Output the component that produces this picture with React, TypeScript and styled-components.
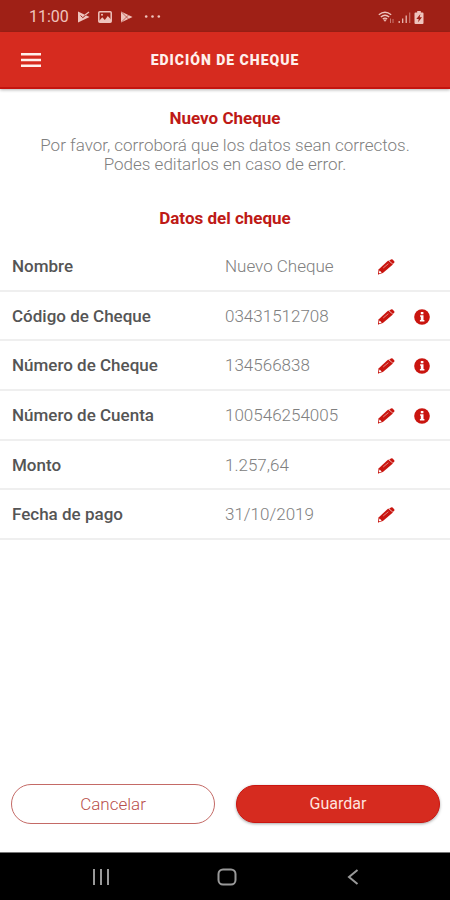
import React from "react";
import styled, { createGlobalStyle, css } from "styled-components";

const GlobalStyle = createGlobalStyle`
  * { box-sizing: border-box; }
  body {
    margin: 0;
    background: #fff;
    font-family: Roboto, "Liberation Sans", sans-serif;
    font-size: 17px;
  }
`;

const Screen = styled.div`
  display: flex;
  flex-direction: column;
  min-height: 100vh;
`;

const StatusBar = styled.div`
  display: flex;
  align-items: center;
  justify-content: space-between;
  height: 32px;
  padding: 2px 26px 0 29px;
  background: #9f2016;
  color: #efc4bd;
`;

const StatusGroup = styled.div<{ $gap: number }>`
  display: flex;
  align-items: center;
  gap: ${(p) => p.$gap}px;
`;

const Clock = styled.span`
  font-size: 16px;
  line-height: 20px;
`;

const AppBar = styled.header`
  display: grid;
  grid-template-columns: 40px 1fr 40px;
  align-items: center;
  height: 57px;
  padding: 0 11px;
  background: #d62b1f;
  border-bottom: 2px solid #c4140e;
  box-shadow: 0 1px 3px rgba(0, 0, 0, 0.3);
`;

const IconButton = styled.button`
  display: inline-flex;
  align-items: center;
  justify-content: center;
  padding: 0;
  border: 0;
  background: none;
  color: #c9150f;
  cursor: pointer;
`;

const MenuButton = styled(IconButton)`
  width: 40px;
  height: 40px;
  color: #fff0ec;
`;

const Title = styled.h1`
  margin: 0;
  text-align: center;
  color: #fff0ec;
  font-size: 14px;
  font-weight: 900;
  line-height: 20px;
  letter-spacing: 1px;
`;

const Main = styled.main`
  flex: 1;
  display: flex;
  flex-direction: column;
  padding-top: 19px;
`;

const Heading = styled.h2`
  margin: 0;
  text-align: center;
  color: #be1a16;
  font-size: 17px;
  font-weight: 700;
  line-height: 20px;
`;

const Intro = styled.p`
  margin: 8px 16px 34px;
  text-align: center;
  color: #808080;
  font-weight: 300;
  line-height: 19px;
`;

const Details = styled.table`
  width: 100%;
  height: 297px;
  margin-top: 15px;
  table-layout: fixed;
  border-collapse: collapse;
  text-align: left;
`;

const Row = styled.tr`
  border-bottom: 2px solid #efefef;
`;

const Label = styled.th`
  width: 50%;
  padding: 0 0 0 12px;
  color: #555;
  font-weight: 500;
`;

const Value = styled.td`
  padding: 0;
  color: #808080;
  font-weight: 300;
`;

const Actions = styled.td`
  width: 80px;
  padding: 0;
`;

const ActionList = styled.div`
  display: flex;
  align-items: center;
  gap: 12px;
  padding: 2px 0 0 4px;

  button {
    width: 24px;
    height: 24px;
  }
`;

const Footer = styled.div`
  display: grid;
  grid-template-columns: 1fr 1fr;
  gap: 21px;
  margin-top: auto;
  padding: 16px 10px 28px 11px;
`;

const PillButton = styled.button<{ $primary?: boolean }>`
  height: 40px;
  border: 1px solid #c46a66;
  border-radius: 20px;
  background: #fff;
  color: #b9504c;
  font: 300 17px/20px Roboto, "Liberation Sans", sans-serif;
  cursor: pointer;
  ${(p) =>
    p.$primary &&
    css`
      height: 38px;
      margin-top: 1px;
      border-color: #cb1510;
      background: #d62b1f;
      color: #ffe3de;
      font-size: 16px;
      font-weight: 400;
      box-shadow: 0 1px 3px rgba(0, 0, 0, 0.35);
    `}
`;

const NavArea = styled.div`
  height: 48px;
  padding-left: 4px;
  border-top: 1px solid #777;
  background: #000;
`;

const NavBar = styled.nav`
  display: grid;
  grid-template-columns: repeat(3, 1fr);
  width: 85%;
  margin: 0 auto;
`;

const NavButton = styled(IconButton)`
  height: 48px;
  color: #999;
`;

const PencilIcon = () => (
  <svg width="18" height="16" viewBox="0 0 18 16" aria-hidden="true">
    <path d="M12.2 1.4 14 .4q.8-.4 1.6.2l1.600 1.700q.7.8 0 1.500l-1.300 1.300z" fill="currentColor" />
    <path d="M11.200 1.600 15.900 5.500 5.900 14 1 15.400l.5-4.900z" fill="currentColor" />
    <path d="m2.500 11.500 2.200 1.900-2.200 1-.6-.6z" fill="#fff" />
    <path d="m6.200 9 5.200-4.300" stroke="#eaa39e" strokeWidth=".8" />
    <path d="m1 15.400.5-1.600 1 1z" fill="currentColor" />
  </svg>
);

const InfoIcon = () => (
  <svg width="16" height="16" viewBox="0 0 16 16" aria-hidden="true">
    <circle cx="8" cy="8" r="7.8" fill="currentColor" />
    <path d="M6.8 3.1h2.6v2.2H6.8zM6.1 6.3h3.4v4.8h.9v1.5H5.9v-1.5h.9V7.8h-.7z" fill="#fff" />
  </svg>
);

const PlayCheckIcon = () => (
  <svg width="13" height="12" viewBox="0 0 13 12" aria-hidden="true">
    <path d="M1 .5 12.5 6 1 11.5z" fill="currentColor" />
    <path d="m3.5 4.5 2.3 2.2L11 2" fill="none" stroke="#9f2016" strokeWidth="1" />
    <path d="m8 4 4-3" stroke="currentColor" strokeWidth="1.2" />
  </svg>
);

const ImageIcon = () => (
  <svg width="14" height="12" viewBox="0 0 14 12" aria-hidden="true">
    <rect x=".8" y=".8" width="12.4" height="10.4" rx="1" fill="none" stroke="currentColor" strokeWidth="1.5" />
    <path d="m1 10 3.3-3.8L6.8 9l3-4L13 8.5V11H1z" fill="currentColor" />
    <circle cx="4" cy="3.7" r="1" fill="currentColor" />
  </svg>
);

const PlayIcon = () => (
  <svg width="13" height="12" viewBox="0 0 13 12" aria-hidden="true">
    <path d="M1 .5 12.5 6 1 11.5z" fill="currentColor" />
    <path d="M1.5 1 8.5 8M1.5 11l7-7" stroke="#9f2016" strokeWidth=".6" />
  </svg>
);

const DotsIcon = () => (
  <svg width="20" height="4" viewBox="0 0 20 4" fill="currentColor" aria-hidden="true">
    <circle cx="5.2" cy="1.5" r="1.3" />
    <circle cx="11.5" cy="1.5" r="1.3" />
    <circle cx="17.8" cy="1.5" r="1.3" />
  </svg>
);

const WifiIcon = () => (
  <svg width="17" height="13" viewBox="0 0 17 13" fill="none" stroke="currentColor" aria-hidden="true">
    <path d="M.8 3.8Q7 -1.3 13.2 3.8M2.8 6Q7 2.5 11.2 6M4.8 8Q7 6.2 9.2 8" strokeWidth="1.3" />
    <path d="m5.7 8.8 1.3 1.6 1.3-1.6z" fill="currentColor" strokeWidth=".5" />
    <path d="M12.5 12V7.5M15 8v4" strokeWidth=".9" opacity=".6" />
  </svg>
);

const SignalIcon = () => (
  <svg width="13" height="13" viewBox="0 0 13 13" fill="none" stroke="currentColor" strokeWidth="1.2" aria-hidden="true">
    <path d="M1.2 12v-2M4.7 12V7.5M8.2 12V4.5" />
    <path d="M11.7 12V1.5" opacity=".5" />
  </svg>
);

const BatteryIcon = () => (
  <svg width="10" height="13" viewBox="0 0 10 13" aria-hidden="true">
    <path d="M3.2 0h3.6v1.5h1.7q1 0 1 1V12q0 1-1 1h-7q-1 0-1-1V2.5q0-1 1-1h1.7z" fill="currentColor" />
    <path d="M6.4 3 2.3 8h2.4l-.6 3.2L8 6.3H5.7z" fill="#9f2016" />
  </svg>
);

const MenuIcon = () => (
  <svg width="20" height="14" viewBox="0 0 20 14" fill="currentColor" aria-hidden="true">
    <path d="M0 0h20v2.6H0zM0 5.7h20v2.6H0zM0 11.4h20V14H0z" />
  </svg>
);

const RecentsIcon = () => (
  <svg width="18" height="16" viewBox="0 0 18 16" fill="currentColor" aria-hidden="true">
    <path d="M1 0h2v16H1zM8 0h2v16H8zM15 0h2v16h-2z" />
  </svg>
);

const HomeIcon = () => (
  <svg width="20" height="18" viewBox="0 0 20 18" fill="none" stroke="currentColor" strokeWidth="2" aria-hidden="true">
    <rect x="1.5" y="1.5" width="17" height="15" rx="4.5" />
  </svg>
);

const BackIcon = () => (
  <svg width="12" height="16" viewBox="0 0 12 16" fill="none" stroke="currentColor" strokeWidth="2" aria-hidden="true">
    <path d="M10.5 1 2 8l8.5 7" />
  </svg>
);

interface Field {
  label: string;
  value: string;
  info?: boolean;
}

const fields: Field[] = [
  { label: "Nombre", value: "Nuevo Cheque" },
  { label: "Código de Cheque", value: "03431512708", info: true },
  { label: "Número de Cheque", value: "134566838", info: true },
  { label: "Número de Cuenta", value: "100546254005", info: true },
  { label: "Monto", value: "1.257,64" },
  { label: "Fecha de pago", value: "31/10/2019" },
];

export default function App() {
  return (
    <Screen>
      <GlobalStyle />
      <StatusBar>
        <StatusGroup $gap={8}>
          <Clock>11:00</Clock>
          <PlayCheckIcon />
          <ImageIcon />
          <PlayIcon />
          <DotsIcon />
        </StatusGroup>
        <StatusGroup $gap={3}>
          <WifiIcon />
          <SignalIcon />
          <BatteryIcon />
        </StatusGroup>
      </StatusBar>
      <AppBar>
        <MenuButton type="button" aria-label="Menú">
          <MenuIcon />
        </MenuButton>
        <Title>EDICIÓN DE CHEQUE</Title>
      </AppBar>
      <Main>
        <Heading>Nuevo Cheque</Heading>
        <Intro>
          Por favor, corroborá que los datos sean correctos.
          <br />
          Podes editarlos en caso de error.
        </Intro>
        <Heading id="datos">Datos del cheque</Heading>
        <Details aria-labelledby="datos">
          <tbody>
            {fields.map((f) => (
              <Row key={f.label}>
                <Label scope="row">{f.label}</Label>
                <Value>{f.value}</Value>
                <Actions>
                  <ActionList>
                    <IconButton type="button" aria-label={`Editar ${f.label}`}>
                      <PencilIcon />
                    </IconButton>
                    {f.info && (
                      <IconButton type="button" aria-label={`Información de ${f.label}`}>
                        <InfoIcon />
                      </IconButton>
                    )}
                  </ActionList>
                </Actions>
              </Row>
            ))}
          </tbody>
        </Details>
        <Footer>
          <PillButton type="button">Cancelar</PillButton>
          <PillButton type="button" $primary>
            Guardar
          </PillButton>
        </Footer>
      </Main>
      <NavArea>
        <NavBar aria-label="Sistema">
          <NavButton type="button" aria-label="Recientes">
            <RecentsIcon />
          </NavButton>
          <NavButton type="button" aria-label="Inicio">
            <HomeIcon />
          </NavButton>
          <NavButton type="button" aria-label="Atrás">
            <BackIcon />
          </NavButton>
        </NavBar>
      </NavArea>
    </Screen>
  );
}
